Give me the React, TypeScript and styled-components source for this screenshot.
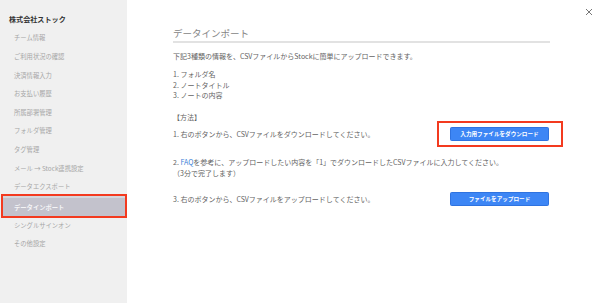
import React from "react";
import styled, { createGlobalStyle } from "styled-components";

const Global = createGlobalStyle`
  html, body { margin: 0; padding: 0; background: #fff; }
  body { font-family: "Noto Sans CJK JP", "Noto Sans", sans-serif; }
  * { box-sizing: border-box; }
`;

const Page = styled.div`
  display: flex;
  width: 600px;
  height: 303px;
  overflow: hidden;
`;

const Sidebar = styled.nav`
  width: 127px;
  flex-shrink: 0;
  background: #f0f0f0;
  padding-top: 13px;
  display: flex;
  flex-direction: column;
`;

const Company = styled.div`
  font-size: 7.1px;
  font-weight: 700;
  color: #333;
  line-height: 12px;
  padding-left: 9px;
  margin-bottom: 3.7px;
`;

const NavItem = styled.div<{ $active?: boolean }>`
  height: ${(p) => (p.$active ? "20px" : "18.6px")};
  margin: ${(p) => (p.$active ? "0 2px 0 3px" : "0 3px")};
  padding-left: 11px;
  display: flex;
  align-items: center;
  font-size: 6.3px;
  color: ${(p) => (p.$active ? "#f4f4f6" : "#a6a6a6")};
  background: ${(p) => (p.$active ? "#c3c2cc" : "transparent")};
  border-top: ${(p) => (p.$active ? "2px solid #d6d6dc" : "none")};
  outline: ${(p) => (p.$active ? "2px solid #f33a1f" : "none")};
  white-space: nowrap;
  font-weight: ${(p) => (p.$active ? 700 : 400)};
`;

const Main = styled.main`
  position: relative;
  flex: 1;
  padding: 26px 0 0 46px;
`;

const Content = styled.div`
  width: 377px;
  color: #636363;
  font-size: 7px;
`;

const Title = styled.h1`
  margin: 0;
  font-size: 9.5px;
  font-weight: 400;
  color: #858585;
  line-height: 14px;
  padding-bottom: 1px;
  border-bottom: 2px solid #e2e2e2;
`;

const Para = styled.p<{ $mt: number }>`
  margin: ${(p) => p.$mt}px 0 0;
  line-height: 10.5px;
`;

const Step = styled.div<{ $mt: number }>`
  display: flex;
  justify-content: space-between;
  align-items: center;
  margin-top: ${(p) => p.$mt}px;
  line-height: 10.5px;
`;

const Link = styled.a`
  color: #3b7fd8;
  text-decoration: none;
`;

const Button = styled.button<{ $marked?: boolean }>`
  position: relative;
  width: 99px;
  height: 14px;
  margin-right: 1px;
  padding: 0;
  border: 1px solid #2f73e0;
  border-radius: 1.5px;
  background: #3d86f5;
  color: #fff;
  font-family: inherit;
  font-size: 5.6px;
  font-weight: 700;
  line-height: 12px;
  cursor: pointer;
  &::after {
    content: "";
    display: ${(p) => (p.$marked ? "block" : "none")};
    position: absolute;
    top: -7px;
    bottom: -7px;
    left: -14px;
    right: -15px;
    border: 2px solid #f33a1f;
  }
`;

const Close = styled.button`
  position: absolute;
  top: 8px;
  right: 7px;
  width: 8px;
  height: 8px;
  padding: 0;
  border: 0;
  background: transparent;
  display: flex;
`;

const navItems = [
  "チーム情報",
  "ご利用状況の確認",
  "決済情報入力",
  "お支払い履歴",
  "所属部署管理",
  "フォルダ管理",
  "タグ管理",
  "メール → Stock連携設定",
  "データエクスポート",
  "データインポート",
  "シングルサインオン",
  "その他設定",
];

export default function App() {
  return (
    <>
      <Global />
      <Page>
        <Sidebar>
          <Company>株式会社ストック</Company>
          {navItems.map((n) => (
            <NavItem key={n} $active={n === "データインポート"}>
              {n}
            </NavItem>
          ))}
        </Sidebar>
        <Main>
          <Close aria-label="閉じる">
            <svg width="8" height="8" viewBox="0 0 8 8">
              <path d="M1 1L7 7M7 1L1 7" stroke="#777" strokeWidth="1" />
            </svg>
          </Close>
          <Content>
            <Title>データインポート</Title>
            <Para $mt={8}>
              下記3種類の情報を、CSVファイルからStockに簡単にアップロードできます。
            </Para>
            <Para $mt={7.5}>
              1. フォルダ名
              <br />
              2. ノートタイトル
              <br />
              3. ノートの内容
            </Para>
            <Para $mt={11.5}>【方法】</Para>
            <Step $mt={4.5}>
              <span>1. 右のボタンから、CSVファイルをダウンロードしてください。</span>
              <Button $marked>入力用ファイルをダウンロード</Button>
            </Step>
            <Para $mt={16}>
              2. <Link href="#">FAQ</Link>
              を参考に、アップロードしたい内容を「1」でダウンロードしたCSVファイルに入力してください。
              <br />
              （3分で完了します）
            </Para>
            <Step $mt={14}>
              <span>3. 右のボタンから、CSVファイルをアップロードしてください。</span>
              <Button>ファイルをアップロード</Button>
            </Step>
          </Content>
        </Main>
      </Page>
    </>
  );
}
